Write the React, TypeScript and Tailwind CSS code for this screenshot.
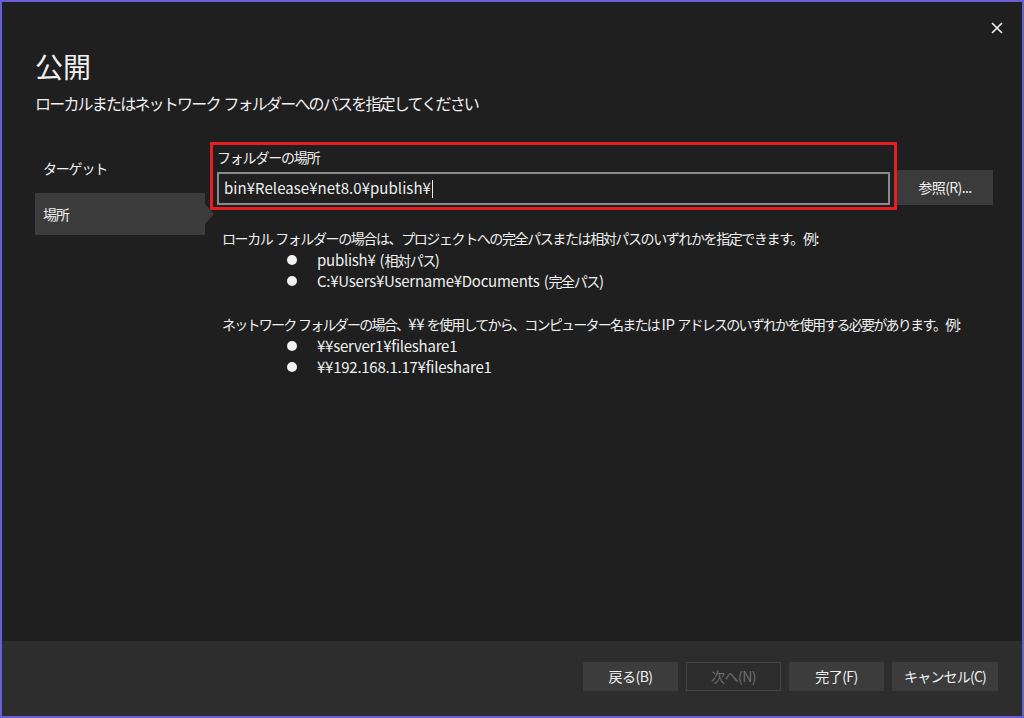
import React from "react";

const font = { fontFamily: '"Noto Sans CJK JP", "Noto Sans", sans-serif' };

// Latin runs are set a bit larger and less condensed than the kana/kanji
function L({ children }: { children: React.ReactNode }) {
  return <span className="text-[15px] tracking-[-0.25px]">{children}</span>;
}

function Bullet({ children }: { children: React.ReactNode }) {
  return (
    <li className="flex h-[21px] items-center pl-[65px]">
      <span className="mr-[20px] block size-[10px] rounded-full bg-[#f2f2f2]" />
      <span>{children}</span>
    </li>
  );
}

function FooterButton({ label, disabled }: { label: string; disabled?: boolean }) {
  return (
    <button
      className={
        disabled
          ? "flex h-[29px] w-[95px] items-center justify-center border border-[#444444] bg-[#2d2d2d] text-[14px] tracking-[-0.5px] text-[#6e6e6e]"
          : "flex h-[29px] w-[95px] items-center justify-center bg-[#3c3c3c] text-[14px] tracking-[-0.5px] text-[#f0f0f0]"
      }
    >
      {label}
    </button>
  );
}

export default function App() {
  return (
    <div
      style={font}
      className="relative flex h-[718px] w-[1024px] flex-col border-2 border-[#6a5fd0] bg-[#1f1f1f] text-[#f0f0f0]"
    >
      <button className="absolute right-[19px] top-[20px] flex size-[12px] items-center justify-center">
        <svg viewBox="0 0 12 12" className="size-[12px]" fill="none" stroke="#f4f4f4" strokeWidth="1.6">
          <path d="M1 1 L11 11 M11 1 L1 11" />
        </svg>
      </button>

      <header className="pl-[33px] pt-[44px]">
        <h1 className="text-[28px] font-normal leading-[40px]">公開</h1>
        <p className="mt-[5px] text-[16px] leading-[24px] tracking-[-1.8px] [word-spacing:2px]">
          ローカルまたはネットワーク フォルダーへのパスを指定してください
        </p>
      </header>

      <div className="mt-[27px] flex flex-1">
        <nav className="w-[208px] pl-[33px] pt-[5px] text-[14px] tracking-[-1.2px]">
          <div className="flex h-[42px] items-center pl-[8px]">ターゲット</div>
          <div className="relative mt-[4px] flex h-[42px] w-[170px] items-center bg-[#3c3c3c] pl-[8px]">
            場所
            <span className="absolute right-[-9px] top-[11px] h-0 w-0 border-y-[10px] border-l-[9px] border-y-transparent border-l-[#3c3c3c]" />
          </div>
        </nav>

        <section className="flex-1 text-[14px]">
          <div className="flex items-end">
            <div className="h-[68px] w-[687px] border-[3px] border-[#e81c24] px-[4px] pt-[2px]">
              <div className="h-[20px] text-[14px] leading-[20px] tracking-[-1.2px]">フォルダーの場所</div>
              <div className="mt-[5px] flex h-[33px] items-center border-2 border-[#8a8a8a] bg-[#1f1f1f] pl-[5px] text-[15px] tracking-[0.05px]">
                <span>bin¥Release¥net8.0¥publish¥</span>
                <span className="ml-[1px] block h-[18px] w-[1px] bg-[#f0f0f0]" />
              </div>
            </div>
            <button className="mb-[5px] flex h-[35px] w-[96px] items-center justify-center bg-[#3b3b3b] text-[14px] tracking-[-0.6px]">
              参照(R)...
            </button>
          </div>

          <div className="mt-[18px] pl-[12px] leading-[21px] tracking-[-1.4px] [word-spacing:1px]">
            <p>ローカル フォルダーの場合は、プロジェクトへの完全パスまたは相対パスのいずれかを指定できます。例:</p>
            <ul>
              <Bullet>
                <L>publish¥ (</L>相対パス<L>)</L>
              </Bullet>
              <Bullet>
                <L>C:¥Users¥Username¥Documents (</L>完全パス<L>)</L>
              </Bullet>
            </ul>
            <div className="h-[22px]" />
            <p className="tracking-[-1.75px]">
              ネットワーク フォルダーの場合、<L>¥¥</L> を使用してから、コンピューター名または <L>IP</L>{" "}
              アドレスのいずれかを使用する必要があります。例:
            </p>
            <ul>
              <Bullet>
                <L>¥¥server1¥fileshare1</L>
              </Bullet>
              <Bullet>
                <L>¥¥192.168.1.17¥fileshare1</L>
              </Bullet>
            </ul>
          </div>
        </section>
      </div>

      <footer className="flex h-[75px] items-start justify-end gap-[8px] bg-[#2d2d2d] pr-[24px] pt-[21px]">
        <FooterButton label="戻る(B)" />
        <FooterButton label="次へ(N)" disabled />
        <FooterButton label="完了(F)" />
        <button className="flex h-[29px] w-[106px] items-center justify-center bg-[#3c3c3c] text-[14px] tracking-[-0.8px] text-[#f0f0f0]">
          キャンセル(C)
        </button>
      </footer>
    </div>
  );
}
